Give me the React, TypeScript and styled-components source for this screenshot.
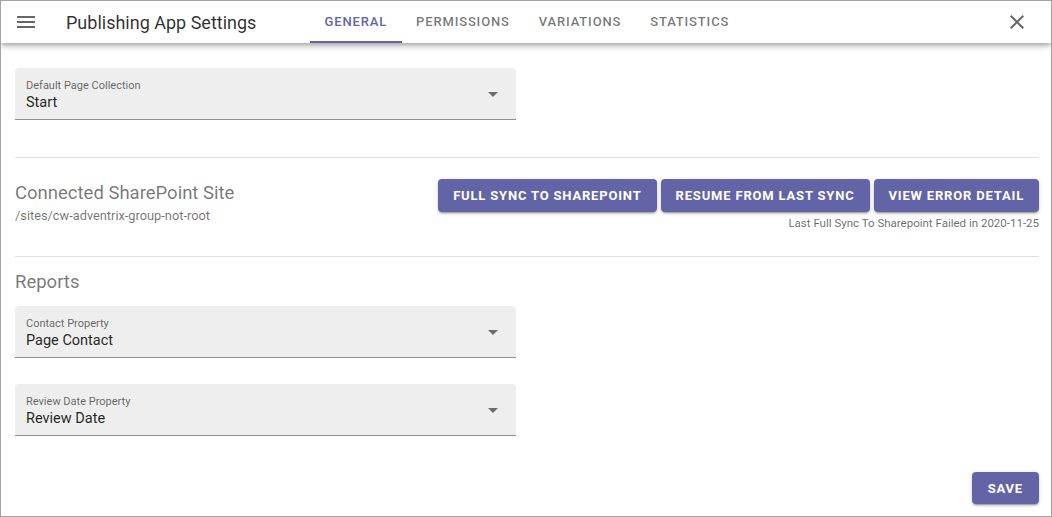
import React from "react";
import styled, { createGlobalStyle } from "styled-components";

const GlobalStyle = createGlobalStyle`
  html, body { margin: 0; padding: 0; background: #ffffff; }
  body { font-family: Roboto, "Noto Sans", Arial, sans-serif; }
  * { box-sizing: border-box; }
`;

const Frame = styled.div`
  width: 1052px;
  height: 517px;
  border: 1px solid #a3a3a3;
  display: flex;
  flex-direction: column;
  background: #fff;
  overflow: hidden;
`;

const AppBar = styled.header`
  height: 42px;
  flex: 0 0 42px;
  display: flex;
  align-items: stretch;
  background: #fff;
  box-shadow: 0 2px 4px -1px rgba(0, 0, 0, 0.2), 0 4px 5px 0 rgba(0, 0, 0, 0.14),
    0 1px 10px 0 rgba(0, 0, 0, 0.12);
  position: relative;
  z-index: 1;
`;

const IconButton = styled.button<{ $ml?: number; $mr?: number }>`
  border: 0;
  background: none;
  padding: 0;
  margin-left: ${(p) => p.$ml ?? 0}px;
  margin-right: ${(p) => p.$mr ?? 0}px;
  width: 24px;
  display: flex;
  align-items: center;
  justify-content: center;
  color: rgba(0, 0, 0, 0.6);
  cursor: pointer;
`;

const Title = styled.h1`
  margin: 0 0 0 28px;
  width: 244px;
  font-size: 18px;
  font-weight: 400;
  color: rgba(0, 0, 0, 0.82);
  display: flex;
  align-items: center;
  white-space: nowrap;
`;

const Tabs = styled.nav`
  display: flex;
  align-items: stretch;
`;

const Tab = styled.div<{ $active?: boolean }>`
  padding: 0 14.5px;
  display: flex;
  align-items: center;
  font-size: 13px;
  font-weight: 500;
  letter-spacing: 0.85px;
  text-transform: uppercase;
  color: ${(p) => (p.$active ? "#6264a7" : "rgba(0,0,0,0.55)")};
  border-bottom: 2px solid ${(p) => (p.$active ? "#6264a7" : "transparent")};
`;

const Spacer = styled.div`
  flex: 1;
`;

const Content = styled.main`
  flex: 1;
  padding: 25px 12px 0 14px;
  display: flex;
  flex-direction: column;
`;

const Field = styled.div<{ $mt?: number }>`
  width: 501px;
  height: 52px;
  margin-top: ${(p) => p.$mt ?? 0}px;
  background: #eeeeee;
  border-radius: 4px 4px 0 0;
  border-bottom: 1px solid #8f8f8f;
  padding: 11px 11px 0 11px;
  display: flex;
  align-items: flex-start;
`;

const FieldText = styled.div`
  flex: 1;
  display: flex;
  flex-direction: column;
`;

const FieldLabel = styled.span`
  font-size: 11px;
  line-height: 14px;
  color: rgba(0, 0, 0, 0.6);
`;

const FieldValue = styled.span`
  font-size: 14.5px;
  line-height: 19px;
  color: rgba(0, 0, 0, 0.87);
`;

const Arrow = styled.svg`
  width: 24px;
  height: 24px;
  margin-top: 3px;
  fill: rgba(0, 0, 0, 0.54);
`;

const Divider = styled.hr<{ $mt: number }>`
  margin: ${(p) => p.$mt}px 0 0 0;
  border: 0;
  height: 1px;
  background: #e0e0e0;
`;

const SyncRow = styled.section`
  margin-top: 21px;
  display: flex;
  justify-content: space-between;
  align-items: flex-start;
`;

const SectionInfo = styled.div`
  display: flex;
  flex-direction: column;
  padding-top: 2px;
`;

const SectionHeading = styled.h2<{ $mt?: number }>`
  margin: ${(p) => p.$mt ?? 0}px 0 0 0;
  font-size: 18.5px;
  line-height: 24px;
  font-weight: 400;
  color: rgba(0, 0, 0, 0.54);
`;

const SubText = styled.span`
  font-size: 12.8px;
  line-height: 16px;
  margin-top: 3px;
  color: rgba(0, 0, 0, 0.56);
`;

const ActionsColumn = styled.div`
  display: flex;
  flex-direction: column;
  align-items: flex-end;
`;

const ButtonGroup = styled.div`
  display: flex;
  gap: 4px;
`;

const Button = styled.button`
  height: 33px;
  padding: 0 15px;
  border: 0;
  border-radius: 4px;
  background: #6264a7;
  color: #fff;
  font-family: Roboto, Arial, sans-serif;
  font-size: 13px;
  font-weight: 700;
  letter-spacing: 0.82px;
  text-transform: uppercase;
  box-shadow: 0 3px 1px -2px rgba(0, 0, 0, 0.2), 0 2px 2px 0 rgba(0, 0, 0, 0.14),
    0 1px 5px 0 rgba(0, 0, 0, 0.12);
  cursor: pointer;
`;

const Caption = styled.span`
  margin-top: 4px;
  font-size: 11.5px;
  line-height: 14px;
  color: rgba(0, 0, 0, 0.6);
`;

const Footer = styled.div`
  margin-top: auto;
  margin-bottom: 12px;
  display: flex;
  justify-content: flex-end;
`;

const SaveButton = styled(Button)`
  height: 32px;
  padding: 0 16px;
`;

const SelectField = ({ label, value, mt }: { label: string; value: string; mt?: number }) => (
  <Field $mt={mt}>
    <FieldText>
      <FieldLabel>{label}</FieldLabel>
      <FieldValue>{value}</FieldValue>
    </FieldText>
    <Arrow viewBox="0 0 24 24">
      <path d="M7 10l5 5 5-5z" />
    </Arrow>
  </Field>
);

export default function App() {
  return (
    <>
      <GlobalStyle />
      <Frame>
        <AppBar>
          <IconButton $ml={13} aria-label="menu">
            <svg width="24" height="24" viewBox="0 0 24 24" fill="rgba(0,0,0,0.6)">
              <path d="M3 18h18v-2H3v2zm0-5h18v-2H3v2zm0-7v2h18V6H3z" />
            </svg>
          </IconButton>
          <Title>Publishing App Settings</Title>
          <Tabs>
            <Tab $active>General</Tab>
            <Tab>Permissions</Tab>
            <Tab>Variations</Tab>
            <Tab>Statistics</Tab>
          </Tabs>
          <Spacer />
          <IconButton $mr={22} aria-label="close">
            <svg width="24" height="24" viewBox="0 0 24 24" fill="rgba(0,0,0,0.6)">
              <path d="M19 6.41L17.59 5 12 10.59 6.41 5 5 6.41 10.59 12 5 17.59 6.41 19 12 13.41 17.59 19 19 17.59 13.41 12z" />
            </svg>
          </IconButton>
        </AppBar>
        <Content>
          <SelectField label="Default Page Collection" value="Start" />
          <Divider $mt={37} />
          <SyncRow>
            <SectionInfo>
              <SectionHeading>Connected SharePoint Site</SectionHeading>
              <SubText>/sites/cw-adventrix-group-not-root</SubText>
            </SectionInfo>
            <ActionsColumn>
              <ButtonGroup>
                <Button>Full Sync to SharePoint</Button>
                <Button>Resume from last sync</Button>
                <Button>View error detail</Button>
              </ButtonGroup>
              <Caption>Last Full Sync To Sharepoint Failed in 2020-11-25</Caption>
            </ActionsColumn>
          </SyncRow>
          <Divider $mt={26} />
          <SectionHeading $mt={13}>Reports</SectionHeading>
          <SelectField label="Contact Property" value="Page Contact" mt={12} />
          <SelectField label="Review Date Property" value="Review Date" mt={26} />
          <Footer>
            <SaveButton>Save</SaveButton>
          </Footer>
        </Content>
      </Frame>
    </>
  );
}
